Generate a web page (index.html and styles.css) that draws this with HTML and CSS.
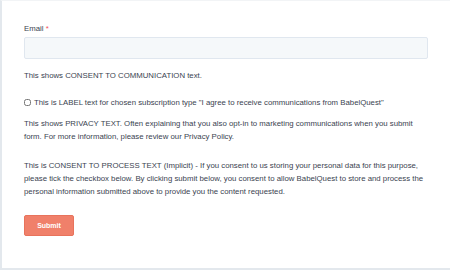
FILE: index.html
```html
<!DOCTYPE html>
<html lang="en">

<head>
    <meta charset="UTF-8">
    <meta name="viewport" content="width=device-width, initial-scale=1.0">
    <title>Form</title>
    <link rel="stylesheet" href="styles.css">
</head>

<body>
    <div class="panel">
        <form class="form">
            <div class="field">
                <label class="label" for="email">Email <span class="req">*</span></label>
                <input class="input" type="email" id="email" name="email">
            </div>

            <p class="text consent">This shows CONSENT TO COMMUNICATION text.</p>

            <label class="check">
                <input type="checkbox" class="box">
                <span>This is LABEL text for chosen subscription type "I agree to receive communications from BabelQuest"</span>
            </label>

            <p class="text privacy">This shows PRIVACY TEXT. Often explaining that you also opt-in to marketing communications when you submit form. For more information, please review our Privacy Policy.</p>

            <p class="text process">This is CONSENT TO PROCESS TEXT (Implicit) - If you consent to us storing your personal data for this purpose, please tick the checkbox below. By clicking submit below, you consent to allow BabelQuest to store and process the personal information submitted above to provide you the content requested.</p>

            <button type="submit" class="submit">Submit</button>
        </form>
    </div>
</body>
</html>
```

FILE: styles.css
```css
body {
    margin: 0;
    font-family: 'Liberation Sans', Arial, sans-serif;
    background: #fff;
    color: #3a4350;
}

.panel {
    width: 450px;
    height: 270px;
    box-sizing: border-box;
    border-left: 2px solid #e3e8ed;
    border-top: 1px solid #f2f4f6;
    border-bottom: 2px solid #e3e8ed;
    background: #fff;
}

.form {
    padding: 23px 22px 0 22px;
    width: 404px;
}

.label {
    display: block;
    font-size: 7.8px;
    line-height: 10px;
    margin-bottom: 3px;
}

.req {
    color: #f2545b;
}

.input {
    display: block;
    width: 100%;
    height: 22px;
    box-sizing: border-box;
    border: 1px solid #e0e7ef;
    border-radius: 2px;
    background: #f5f8fa;
    margin: 0;
}

.text {
    font-size: 7.8px;
    line-height: 13px;
    margin: 0;
}

.consent {
    margin-top: 10px;
}

.check {
    display: flex;
    align-items: center;
    gap: 3px;
    font-size: 7.8px;
    line-height: 13px;
    margin-top: 14px;
}

.box {
    width: 7px;
    height: 7px;
    margin: 0;
}

.privacy {
    margin-top: 8px;
}

.process {
    margin-top: 16px;
}

.submit {
    margin-top: 17px;
    width: 50px;
    height: 21px;
    border: 1px solid #e8735c;
    border-radius: 2px;
    background: #f0806a;
    color: #fff;
    font-family: inherit;
    font-size: 7px;
    font-weight: bold;
    padding: 0;
}
```
